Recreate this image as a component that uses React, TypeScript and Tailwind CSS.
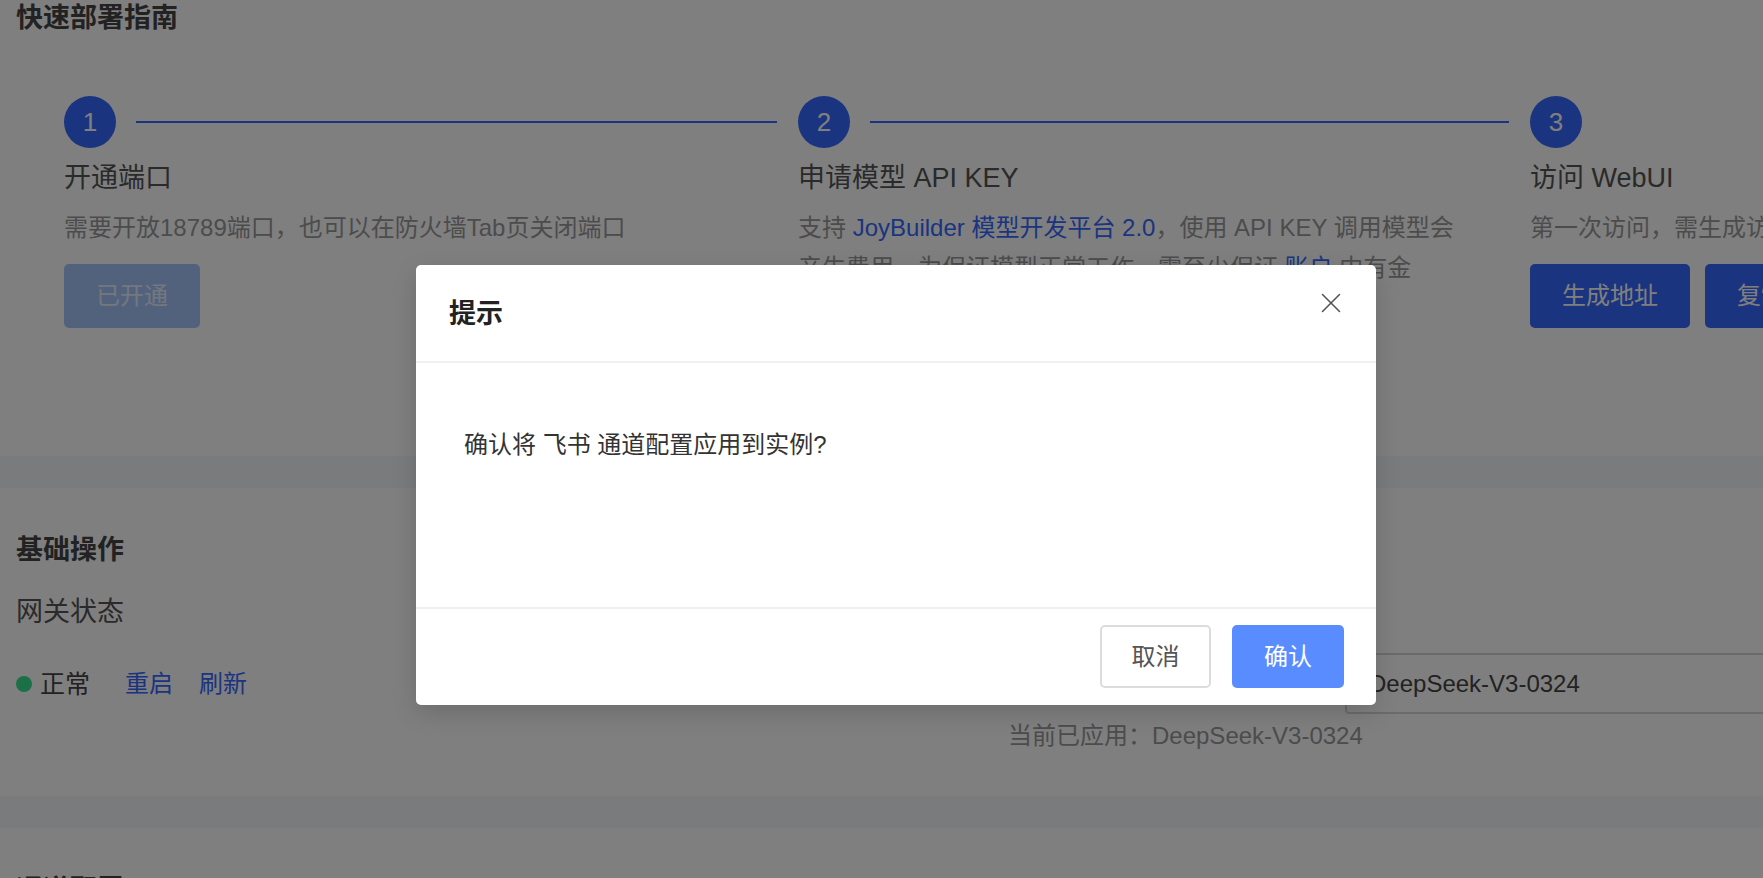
import { X } from 'lucide-react';

const steps = [
  { n: 1, title: '开通端口' },
  { n: 2, title: '申请模型 API KEY' },
  { n: 3, title: '访问 WebUI' },
];

function StepHead({ n, last }: { n: number; last?: boolean }) {
  return (
    <div className="flex items-center">
      <span className="grid h-[52px] w-[52px] shrink-0 place-items-center rounded-full bg-[#3668ff] text-[26px] leading-none text-white">
        {n}
      </span>
      {!last && <div className="ml-5 mr-[21px] h-[2px] flex-1 bg-[#3668ff]" />}
    </div>
  );
}

export default function App() {
  return (
    <div className="relative h-[878px] w-full overflow-hidden bg-[#f4f6fa] [font-family:'Liberation_Sans','Noto_Sans_CJK_SC',sans-serif]">
      {/* 快速部署指南 */}
      <section className="bg-white px-4 pb-12">
        <h2 className="text-[27px] font-bold leading-[36px] text-[#444]">快速部署指南</h2>
        <div className="mt-[60px] flex pl-12">
          <div className="w-[734px] shrink-0">
            <StepHead n={steps[0].n} />
            <h3 className="mt-[10px] text-[27px] leading-[40px] text-[#555]">{steps[0].title}</h3>
            <p className="mt-[10px] w-[660px] text-[24px] leading-[40px] text-[#999]">
              需要开放18789端口，也可以在防火墙Tab页关闭端口
            </p>
            <button className="mt-4 h-16 rounded-[5px] bg-[#a4c4fa] px-8 text-[24px] text-white/75">已开通</button>
          </div>

          <div className="w-[732px] shrink-0">
            <StepHead n={steps[1].n} />
            <h3 className="mt-[10px] text-[27px] leading-[40px] text-[#555]">{steps[1].title}</h3>
            <p className="mt-[10px] w-[660px] text-[24px] leading-[40px] text-[#999]">
              支持 <span className="text-[#3668ff]">JoyBuilder 模型开发平台 2.0</span>，使用 API KEY 调用模型会产生费用，为保证模型正常工作，需至少保证 <span className="text-[#3668ff]">账户</span> 中有金额，余额不足将无法使用。
            </p>
            <button className="mt-4 h-16 rounded-[5px] bg-[#3668ff] px-8 text-[24px] text-white">去申请</button>
          </div>

          <div className="w-[734px] shrink-0">
            <StepHead n={steps[2].n} last />
            <h3 className="mt-[10px] text-[27px] leading-[40px] text-[#555]">{steps[2].title}</h3>
            <p className="mt-[10px] whitespace-nowrap text-[24px] leading-[40px] text-[#999]">
              第一次访问，需生成访问地址，复制后在浏览器中打开
            </p>
            <div className="mt-4 flex gap-[15px]">
              <button className="h-16 rounded-[5px] bg-[#3668ff] px-8 text-[24px] text-white">生成地址</button>
              <button className="h-16 rounded-[5px] bg-[#3668ff] px-8 text-[24px] text-white">复制地址</button>
            </div>
          </div>
        </div>
      </section>

      {/* 基础操作 */}
      <section className="mt-8 bg-white px-4 pb-10 pt-[44px]">
        <h2 className="text-[27px] font-bold leading-[36px] text-[#444]">基础操作</h2>
        <div className="mt-6 flex">
          <div className="w-[992px] shrink-0">
            <h3 className="text-[27px] leading-[40px] text-[#555]">网关状态</h3>
            <div className="mt-8 flex items-center text-[24px] leading-[40px]">
              <span className="h-4 w-4 rounded-full bg-[#38e090]" />
              <span className="ml-2 text-[25px] text-[#444]">正常</span>
              <button className="ml-[35px] text-[#3668ff]">重启</button>
              <button className="ml-[26px] text-[#3668ff]">刷新</button>
            </div>
          </div>
          <div className="shrink-0">
            <h3 className="text-[27px] leading-[40px] text-[#555]">模型配置</h3>
            <div className="mt-[21px] flex items-center">
              <span className="w-[337px] text-[24px] text-[#555]">选择模型</span>
              <div className="flex h-[61px] w-[520px] items-center rounded-[4px] border-2 border-[#d6d6d6] pl-[22px] text-[24px] text-[#444]">
                DeepSeek-V3-0324
              </div>
            </div>
            <p className="mt-0.5 text-[24px] leading-[40px] text-[#999]">当前已应用：DeepSeek-V3-0324</p>
          </div>
        </div>
      </section>

      {/* 通道配置 */}
      <section className="mt-8 h-[200px] bg-white px-4 pt-11">
        <h2 className="text-[27px] font-bold leading-[36px] text-[#444]">通道配置</h2>
      </section>

      {/* overlay + dialog */}
      <div className="absolute inset-0 bg-black/50" />
      <div className="absolute left-[416px] top-[265px] flex h-[440px] w-[960px] flex-col rounded-[5px] bg-white shadow-[0_8px_24px_rgba(0,0,0,0.15)]">
        <div className="relative flex h-[98px] items-center border-b-2 border-[#f0f0f0] px-[33px] pt-[2px]">
          <h2 className="text-[27px] font-bold text-[#222]">提示</h2>
          <button className="absolute right-[28px] top-[21px] text-[#555]">
            <X size={34} strokeWidth={1.1} />
          </button>
        </div>
        <div className="flex-1 border-b-2 border-[#f0f0f0] px-12 pt-[62px]">
          <p className="text-[24px] leading-[40px] text-[#333]">确认将 飞书 通道配置应用到实例?</p>
        </div>
        <div className="flex h-[96px] items-start justify-end gap-[21px] pr-8 pt-4">
          <button className="h-[63px] w-[111px] rounded-[5px] border-2 border-[#dcdcdc] text-[24px] text-[#555]">取消</button>
          <button className="h-[63px] w-[112px] rounded-[5px] bg-[#598dff] text-[24px] text-white">确认</button>
        </div>
      </div>
    </div>
  );
}
